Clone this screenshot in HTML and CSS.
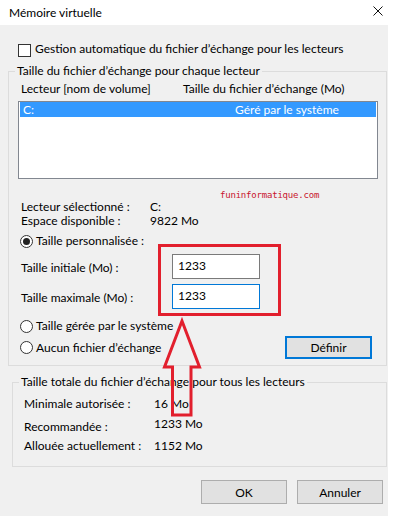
FILE: index.html
```html
<!DOCTYPE html>
<html lang="fr">
<head>
<meta charset="utf-8">
<title>Mémoire virtuelle</title>
<link rel="stylesheet" href="styles.css">
</head>
<body>
<div class="window">
  <div class="titlebar">
    <span class="title">Mémoire virtuelle</span>
    <svg class="close" width="10" height="10" viewBox="0 0 10 10"><path d="M0.5 0.5 L9.5 9.5 M9.5 0.5 L0.5 9.5" stroke="#111" stroke-width="1" fill="none"/></svg>
  </div>
  <div class="content">
    <div class="check-row"><span class="checkbox"></span><span>Gestion automatique du fichier d’échange pour les lecteurs</span></div>

    <fieldset class="group group-drives">
      <legend>Taille du fichier d’échange pour chaque lecteur</legend>
      <div class="list-head"><span class="col-drive">Lecteur [nom de volume]</span><span>Taille du fichier d’échange (Mo)</span></div>
      <div class="listbox">
        <div class="list-item selected"><span class="item-drive">C:</span><span>Géré par le système</span></div>
      </div>
      <div class="info-row info-first"><span class="info-label">Lecteur sélectionné :</span><span>C:</span></div>
      <div class="info-row"><span class="info-label">Espace disponible :</span><span>9822 Mo</span></div>
      <div class="radio-row radio-custom"><span class="radio checked"></span><span>Taille personnalisée :</span></div>
      <div class="field-row field-initial"><span class="field-label">Taille initiale (Mo) :</span><span class="textbox">1233</span></div>
      <div class="field-row field-max"><span class="field-label">Taille maximale (Mo) :</span><span class="textbox focused">1233</span></div>
      <div class="radio-row radio-system"><span class="radio"></span><span>Taille gérée par le système</span></div>
      <div class="radio-row radio-none"><span class="radio"></span><span>Aucun fichier d’échange</span><span class="btn btn-define">Définir</span></div>
    </fieldset>

    <fieldset class="group group-total">
      <legend>Taille totale du fichier d’échange pour tous les lecteurs</legend>
      <div class="total-row total-min"><span class="total-label">Minimale autorisée :</span><span>16 Mo</span></div>
      <div class="total-row total-rec"><span class="total-label rec-label">Recommandée :</span><span>1233 Mo</span></div>
      <div class="total-row total-cur"><span class="total-label">Allouée actuellement :</span><span>1152 Mo</span></div>
    </fieldset>

    <div class="button-row">
      <span class="btn">OK</span>
      <span class="btn">Annuler</span>
    </div>
  </div>

  <div class="watermark">funinformatique.com</div>
  <svg class="annotation" width="394" height="516" viewBox="0 0 394 516">
    <rect x="159.5" y="245.5" width="120" height="69" fill="none" stroke="#e21f2d" stroke-width="3"/>
    <polygon points="182,321 199.5,367 191,367 191,415 172.5,415 172.5,367 164.5,367" fill="none" stroke="#e21f2d" stroke-width="3" stroke-linejoin="miter"/>
  </svg>
</div>
</body>
</html>
```

FILE: styles.css
```css
* { box-sizing: border-box; }

html, body {
  margin: 0;
  padding: 0;
  background: #ffffff;
}

body {
  font-family: Lato, "Noto Sans", sans-serif;
  font-size: 12px;
  color: #000;
  width: 394px;
  height: 516px;
  overflow: hidden;
}

.window {
  position: relative;
  width: 394px;
  height: 516px;
}

.titlebar {
  height: 25px;
  background: #fff;
  display: flex;
  align-items: center;
  justify-content: space-between;
  padding: 0 11px 0 9px;
  line-height: 16px;
}

.close { display: block; margin-top: -4px; }

.content {
  width: 388px;
  height: 491px;
  background: #f0f0f0;
  padding-top: 16px;
  overflow: hidden;
}

.check-row {
  display: flex;
  align-items: center;
  gap: 4px;
  height: 16px;
  line-height: 16px;
  padding-left: 18px;
}

.checkbox {
  width: 13px;
  height: 13px;
  border: 1px solid #333;
  background: #fff;
  flex: none;
  margin-top: 2px;
}

.group {
  margin: 0;
  padding: 0;
  border: 1px solid #dcdcdc;
  min-width: 0;
}

.group legend {
  padding: 0 2px;
  margin-left: 6px;
  line-height: 16px;
}

.group-drives {
  margin: 6px 0 0 8px;
  width: 379px;
  padding-bottom: 6px;
}

.list-head {
  display: flex;
  margin-top: 2px;
  padding-left: 12px;
  line-height: 16px;
}

.col-drive { width: 162px; flex: none; }

.listbox {
  margin: 4px 0 0 9px;
  width: 360px;
  height: 78px;
  border: 1px solid #828790;
  background: #fff;
}

.list-item {
  display: flex;
  margin: 0 1px;
  height: 15px;
  line-height: 15px;
  padding-left: 3px;
}

.list-item.selected {
  background: #3399ff;
  color: #fff;
}

.item-drive { width: 212px; flex: none; }

.info-row {
  display: flex;
  line-height: 14px;
  height: 14px;
  padding-left: 12px;
}

.info-first { margin-top: 21px; }

.info-label { width: 129px; flex: none; }

.radio-row {
  display: flex;
  align-items: center;
  gap: 3px;
  padding-left: 11px;
  line-height: 14px;
  height: 14px;
}

.radio {
  width: 13px;
  height: 13px;
  border: 1px solid #333;
  border-radius: 50%;
  background: #fff;
  flex: none;
  display: flex;
  align-items: center;
  justify-content: center;
}

.radio.checked::after {
  content: "";
  width: 7px;
  height: 7px;
  border-radius: 50%;
  background: #222;
}

.radio-custom { margin-top: 6px; }
.radio-system { margin-top: 10px; }

.radio-none {
  margin-top: 3px;
  height: 23px;
  padding-right: 14px;
}

.field-row {
  display: flex;
  align-items: center;
  height: 25px;
  padding-left: 12px;
}

.field-initial { margin-top: 6px; }
.field-max { margin-top: 5px; }

.field-label { width: 151px; flex: none; padding-top: 1px; }

.textbox {
  width: 88px;
  height: 25px;
  border: 1px solid #7a7a7a;
  background: #fff;
  padding-left: 5px;
  line-height: 21px;
}

.textbox.focused { border-color: #0078d7; }

.btn {
  display: flex;
  align-items: center;
  justify-content: center;
  width: 86px;
  height: 24px;
  background: #e1e1e1;
  border: 1px solid #adadad;
}

.btn-define {
  margin-left: auto;
  width: 87px;
  height: 23px;
  border: 2px solid #0078d7;
}

.group-total {
  margin: 8px 0 0 12px;
  width: 375px;
  padding-bottom: 13px;
}

.total-row {
  display: flex;
  align-items: flex-start;
  padding-left: 11px;
  line-height: 14px;
}

.total-label { width: 130px; flex: none; }

.total-min { margin-top: 7px; }
.total-rec { margin-top: 6px; }
.rec-label { padding-top: 3px; }
.total-cur { margin-top: 5px; }

.button-row {
  display: flex;
  justify-content: flex-end;
  gap: 10px;
  margin-top: 13px;
  padding-right: 5px;
}

.watermark {
  position: absolute;
  left: 220px;
  top: 189px;
  font-family: "DejaVu Sans Mono", "Liberation Mono", monospace;
  font-size: 9px;
  letter-spacing: -0.2px;
  line-height: 12px;
  color: #c8142e;
}

.annotation {
  position: absolute;
  left: 0;
  top: 0;
  pointer-events: none;
}
```
